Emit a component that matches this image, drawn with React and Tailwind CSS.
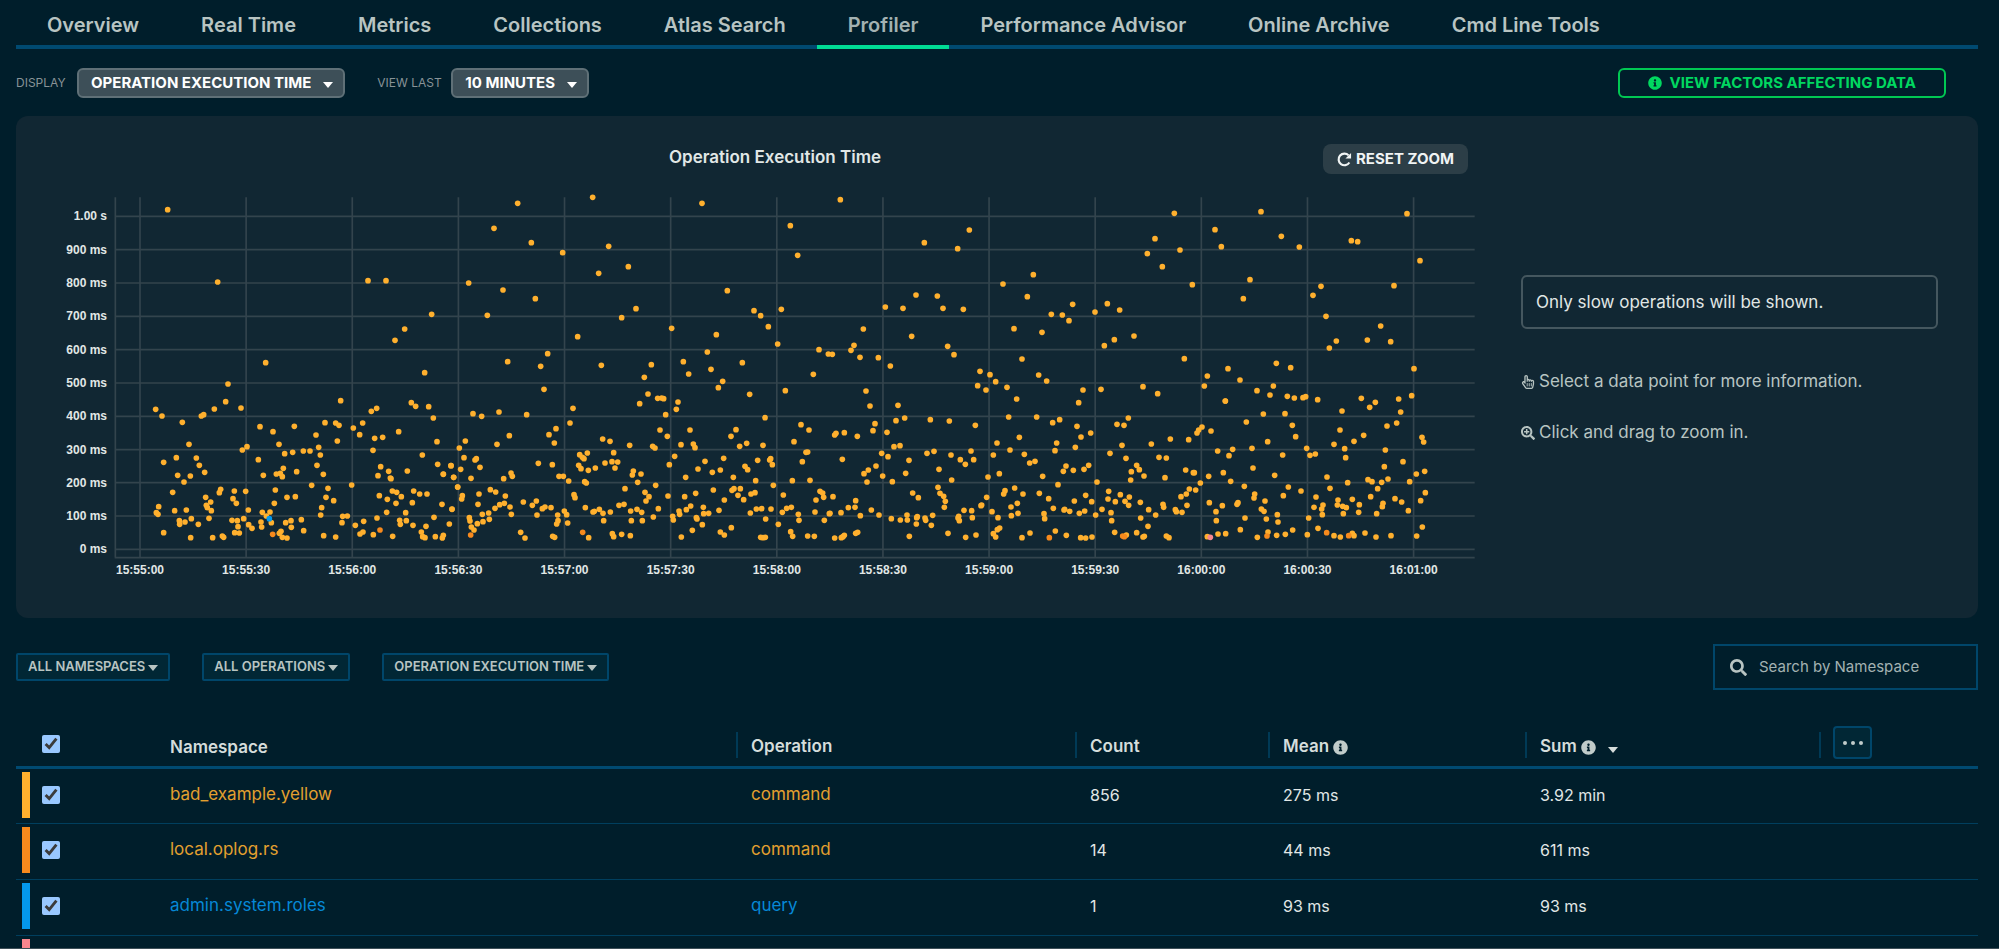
import React from "react";
import {
  FaInfoCircle,
  FaSearch,
  FaSearchPlus,
  FaRegHandPointer,
} from "react-icons/fa";

const tabs = [
  "Overview",
  "Real Time",
  "Metrics",
  "Collections",
  "Atlas Search",
  "Profiler",
  "Performance Advisor",
  "Online Archive",
  "Cmd Line Tools",
];

const yTicks = [
  ["1.00 s", 109],
  ["900 ms", 209],
  ["800 ms", 309],
  ["700 ms", 409],
  ["600 ms", 509],
  ["500 ms", 609],
  ["400 ms", 709],
  ["300 ms", 809],
  ["200 ms", 908],
  ["100 ms", 1008],
  ["0 ms", 1108],
];

const xTicks = [
  "15:55:00",
  "15:55:30",
  "15:56:00",
  "15:56:30",
  "15:57:00",
  "15:57:30",
  "15:58:00",
  "15:58:30",
  "15:59:00",
  "15:59:30",
  "16:00:00",
  "16:00:30",
  "16:01:00",
];

// Samples as "x,y" pairs in chart units, grouped by time window.
const windows = [
  {
    dx: 0,
    dy: 0,
    points:
      "323,89 473,306 504,612 497,665 463,687 543,684 287,688 306,708 367,727 424,708 431,704 387,793 349,833 311,847 409,834 418,856 434,877 353,886 391,888 372,906 338,937 296,980 289,998 294,1003 344,992 379,990 311,1058 358,1022 359,1033 375,1026 394,1016 415,1033 392,1073 437,952 452,966 439,976 442,983 454,992 447,1015 482,928 478,938 458,1073 487,1068 491,1072 523,933 557,934 519,956 529,970 565,990 516,1021 532,1022 551,1016 534,1040 566,1034 576,1045 524,1058 538,1059 547,810 561,800 617,548 600,740 639,755 703,739 657,793 674,821 698,817 595,839 610,886 649,882 661,880 670,865 667,890 710,875 730,813 750,813 768,765 776,802 781,825 795,728 827,729 837,736 842,662 832,783 771,856 790,883 755,916 804,925 875,915 646,930 643,970 681,952 706,950 798,952 821,962 785,983 607,997 630,996 619,1008 603,1026 634,1028 605,1041 677,1028 693,1022 694,1042 724,1019 731,1052 658,1060 663,1054 667,1072 681,1074 782,1005 848,1009 862,1008 846,1028 791,1067 827,1071 886,1036 911,1024 900,1062 909,1056 940,1064 924,302 978,302 1115,403 1034,447 1005,481 1094,578 1054,668 1067,679 1106,680 950,685 934,694 1120,714 908,729 880,744 899,764 944,775 968,772 1016,755 939,811 1131,785 1087,825 962,860 954,887 986,874 991,894 993,896 1042,873 1133,853 1150,883 958,947 982,958 997,933 1010,937 1024,950 1008,970 1061,933 1079,942 1101,942 1057,968 980,997 1037,998 951,1014 1019,1021 1021,1033 1039,1022 1059,1036 1098,1039 1122,1012 998,1069 1084,1056 1088,1070 1095,1073 1126,1070 1173,857 1181,892 1193,921 1176,987 1168,1032 1146,973 1150,1066 1147,1074",
  },
  {
    dx: 1140,
    dy: 0,
    points:
      "10,882 58,804 76,783 53,921 62,868 72,833 93,895 109,836 105,840 120,862 67,947 65,957 117,942 114,973 88,1013 90,1023 94,1041 102,1050 112,1031 127,1003 129,1025 146,999 148,1018 151,929 167,936 196,948 165,985 179,974 193,970 210,981 214,1003 191,896 213,879 217,889 171,793 208,767 177,696 99,701 125,709 142,406 86,309 189,330 162,145 233,70 274,188 286,356 203,545 302,559 323,521 312,628 260,704 327,764 348,746 343,789 295,850 337,854 368,218 250,966 277,976 289,963 307,986 315,981 333,983 291,1005 242,1057 255,1074 338,1069 344,1072 357,889 370,889 386,903 353,1005 354,1022 350,1032 373,993 380,1004 383,1029 402,944 405,953 390,729 399,685 413,470 458,52 506,199 476,280 565,260 588,386 545,413 484,556 488,777 510,784 419,824 442,819 427,832 432,836 416,856 423,866 445,871 466,864 434,905 439,909 495,849 516,845 533,846 521,818 525,864 436,983 459,996 463,994 478,988 489,1000 511,996 491,1022 446,1073 517,1061 521,1070 545,1063 537,976 552,973 555,926 572,993 591,988 605,997 574,1022 607,1022 571,1067 569,796 580,873 577,885 603,882 593,907 613,592 634,554 624,642 599,671 653,655 665,654 671,656 677,704 660,750 682,769 638,799 645,804 647,916 615,937 627,950 618,963 655,986 640,1011 684,948 688,854 695,445 714,666 709,688 704,829 723,794 750,750 760,792 765,803 730,545 746,582 786,70 802,516 829,464 813,568 848,604 835,623 737,892 774,867 795,844 817,877 841,870 851,835 734,950 767,940 752,978 739,989 717,993 719,1003 698,1009 700,1020 790,982 791,1001 806,1000 837,991 769,1013 771,1017 787,1034 757,1051 724,1071 820,930 841,1056 33,857 41,892 36,988",
  },
  {
    dx: 1980,
    dy: 0,
    points:
      "13,1065 13,960 33,769 48,749 59,799 80,790 22,332 102,392 122,407 145,440 67,548 89,643 135,713 129,796 184,388 211,137 233,226 361,59 173,492 196,632 243,734 267,750 222,785 113,841 152,836 149,840 157,854 75,859 83,869 40,892 107,902 36,931 42,926 61,926 54,946 71,959 93,942 105,938 160,916 91,999 109,987 125,986 153,987 137,1017 34,1043 122,1072 129,1073 136,1072 175,1033 212,1055 218,1069 190,945 187,997 200,985 214,982 235,1003 237,1021 217,902 270,901 247,845 258,817 263,816 285,996 288,960 300,934 308,939 311,952 339,950 328,1001 330,1000 363,998 313,1021 263,1068 283,1069 344,1074 364,1073 369,1070 373,1066 407,1060 413,1057 385,983 405,982 407,962 421,1007 367,838 344,765 348,760 373,758 412,769 280,583 297,509 325,522 337,523 393,511 402,496 430,447 420,532 475,533 438,633 450,678 465,731 459,752 485,820 504,830 468,858 445,870 432,881 441,906 488,888 454,990 477,1005 511,558 496,381 549,385 588,345 613,188 575,469 534,676 528,722 554,714 501,757 522,800 540,797 567,841 557,880 517,905 578,939 595,953 514,1016 541,1020 561,1005 562,1020 592,1010 590,1013 589,1032 615,1014 617,1021 634,1036 638,1006 568,1069 621,820 642,814 631,719 688,723 652,348 669,385 730,388 713,206 748,150 683,499 702,524 693,825 721,839 736,853 753,813 761,839 766,736 657,868 695,900 654,922 660,940 671,949 676,964 673,982 732,991 755,992 716,1009 714,1014 718,1022 757,1013 684,1060 737,1072 768,1065 783,977 785,975 800,952 804,891 820,825 780,574 810,584 827,605 773,617 798,630 831,789 816,995 834,1013",
  },
  {
    dx: 2820,
    dy: 0,
    points:
      "9,312 42,446 66,537 21,622 50,657 26,711 58,772 30,810 73,823 -2,881 15,932 11,942 44,924 69,942 52,970 33,981 54,1000 34,1007 -1,1044 -8,1049 -20,1061 -13,1071 66,1073 90,1059 100,284 82,350 154,403 187,405 207,422 218,373 126,457 116,585 140,603 110,711 179,719 158,728 170,789 165,812 105,844 89,849 128,889 174,914 118,940 146,956 160,985 132,1001 134,1016 166,1053 199,1066 194,988 192,990 209,994 223,963 190,874 198,858 220,871 252,868 266,856 226,802 243,771 231,739 272,759 249,630 236,668 285,396 322,371 359,390 343,479 313,497 402,468 303,628 257,946 275,965 238,1000 254,993 242,1073 257,1074 276,1071 287,1005 291,906 306,988 333,998 335,1022 326,934 324,957 346,965 361,944 375,964 388,951 386,976 344,1057 379,1065 410,1058 433,1069 429,1071 330,820 366,796 378,835 351,733 372,736 385,714 410,856 418,869 394,875 432,888 392,900 421,967 446,989 422,1014 444,1039 467,1005 429,620 473,641 454,792 511,777 477,832 499,834 495,893 489,973 491,982 499,1068 507,1073 523,100 465,176 442,221 487,260 540,210 577,314 553,536 566,779 591,759 596,750 606,741 633,753 557,870 580,878 583,878 601,909 587,930 568,927 559,942 543,950 561,976 526,989 529,995 546,997 613,618 622,588 645,149 664,200 676,663 653,813 626,889 628,968 648,995 649,1022 622,1070 654,1062",
  },
  {
    dx: 3480,
    dy: -150,
    points:
      "123,245 184,319 238,351 90,449 70,506 24,716 60,750 16,813 79,876 38,958 27,977 10,1028 32,1054 73,1069 7,1127 54,1118 51,1123 75,1164 61,1199 17,1211 111,782 150,795 160,768 169,700 212,713 202,799 223,804 249,803 257,800 130,852 195,851 217,886 227,920 143,935 96,955 188,975 99,1014 164,1036 205,1071 190,1097 243,1083 104,1092 102,1104 135,1113 124,1137 132,1144 139,1167 172,1154 174,1176 144,1206 112,1222 170,1216 196,1213 218,1200 262,1214 266,1164 260,955 270,976 286,972 293,809 279,496 303,469 318,559 328,654 349,633 394,332 413,335 366,843 360,900 342,943 374,956 377,983 402,934 431,916 424,805 449,832 466,817 442,630 482,588 512,635 522,467 561,251 600,392 582,716 575,797 536,807 542,846 530,879 501,888 606,922 611,936 496,960 549,995 493,1010 614,1024 589,1032 569,1055 616,1088 602,1112 321,1041 330,1075 383,1058 288,1101 282,1132 309,1125 305,1137 307,1154 354,1110 352,1125 368,1129 379,1133 370,1151 397,1108 418,1124 416,1147 444,1049 456,1055 485,1057 504,1047 473,1076 452,1100 525,1106 545,1116 489,1120 487,1130 470,1151 565,1142 607,1191 590,1218 513,1217 468,1221 435,1209 397,1210 402,1217 342,1217 361,1221 294,1195",
  },
];

const oplogPoints = [
  [638, 1063],
  [960, 1050],
  [1232, 1065],
  [1568, 1057],
  [2968, 1073],
  [3188, 1068],
  [3193, 1070],
  [3621, 1068],
  [3800, 1058],
  [3866, 1067],
];

function Caret({ className = "" }) {
  return (
    <svg viewBox="0 0 10 6" className={`pointer-events-none h-[6px] w-[10px] ${className}`} aria-hidden="true">
      <path d="M0 0h10L5 6z" fill="currentColor" />
    </svg>
  );
}

function Chart() {
  return (
    <svg
      viewBox="0 0 4254 1230"
      className="block h-auto w-[1418px]"
      role="img"
      aria-label="Operation Execution Time scatter chart"
    >
      <g stroke="#33444d" strokeWidth="5">
        {yTicks.map(([label, y]) => (
          <line key={label} x1="166" x2="4244" y1={y} y2={y} />
        ))}
        {xTicks.map((label, i) => (
          <line key={label} x1={240 + i * 318.4} x2={240 + i * 318.4} y1="52" y2="1132" />
        ))}
        <line x1="166" x2="166" y1="52" y2="1132" />
        <line x1="164" x2="4244" y1="1133" y2="1133" />
      </g>
      <g fill="#e1e7e6" fontFamily="'Liberation Sans', Arial, sans-serif" fontWeight="700" fontSize="36">
        {yTicks.map(([label, y]) => (
          <text key={label} x="141" y={y + 12} textAnchor="end">
            {label}
          </text>
        ))}
        {xTicks.map((label, i) => (
          <text key={label} x={240 + i * 318.4} y="1183" textAnchor="middle">
            {label}
          </text>
        ))}
      </g>
      {windows.map((w) => (
        <g key={w.dx} fill="#ffb02e" transform={`translate(${w.dx} ${w.dy})`}>
          {w.points.split(" ").map((p, j) => {
            const [x, y] = p.split(",");
            return <circle key={j} cx={x} cy={y} r="8.5" />;
          })}
        </g>
      ))}
      <g fill="#f78a1d">
        {oplogPoints.map(([x, y]) => (
          <circle key={x} cx={x} cy={y} r="8.5" />
        ))}
      </g>
      <circle cx="628" cy="1016" r="8.5" fill="#0498ec" />
      <circle cx="3451" cy="1072" r="8.5" fill="#f9868e" />
    </svg>
  );
}

function FilterSelect({ label, value }) {
  return (
    <div className="grid items-center text-[#b8c4c2]">
      <select
        aria-label={label}
        className="col-start-1 row-start-1 field-sizing-content h-7 appearance-none rounded-xs border-2 border-[#00466a] bg-[#012735] pr-[23px] pl-[10px] text-[13px] font-semibold"
      >
        <option>{value}</option>
      </select>
      <Caret className="col-start-1 row-start-1 mt-px mr-3 justify-self-end" />
    </div>
  );
}

function ToolbarSelect({ id, value }) {
  return (
    <div className="grid items-center text-white">
      <select
        id={id}
        className="col-start-1 row-start-1 field-sizing-content h-[30px] appearance-none rounded-md border-2 border-[#5f7077] bg-[#3d4f58] pr-8 pl-3 text-[15px] font-bold"
      >
        <option>{value}</option>
      </select>
      <Caret className="col-start-1 row-start-1 mt-[3px] mr-3 justify-self-end" />
    </div>
  );
}

function HeadCell({ children }) {
  return (
    <th className="h-[38px] p-0 text-left align-bottom">
      <div className="mb-2 flex h-[26px] items-center gap-1 border-l-2 border-[#003a56] pt-1 pl-[13px] text-[17px] font-semibold text-[#d5dddb]">
        {children}
      </div>
    </th>
  );
}

const rows = [
  { ns: "bad_example.yellow", op: "command", count: "856", mean: "275 ms", sum: "3.92 min", bar: "bg-[#ffb02e]", text: "text-[#e3a02f]" },
  { ns: "local.oplog.rs", op: "command", count: "14", mean: "44 ms", sum: "611 ms", bar: "bg-[#f78a1d]", text: "text-[#e3a02f]" },
  { ns: "admin.system.roles", op: "query", count: "1", mean: "93 ms", sum: "93 ms", bar: "bg-[#0498ec]", text: "text-[#0688d6]" },
  { ns: "", op: "", count: "", mean: "", sum: "", bar: "bg-[#f9868e]", text: "text-[#f9868e]" },
];

export default function App() {
  return (
    <div className="flex h-screen flex-col overflow-hidden border-b border-[#3d4f58] bg-[#001e2b] pr-[21px] pl-4 font-['Inter',sans-serif] text-[#e1e7e6]">
      <nav className="flex h-[49px] shrink-0 border-b-4 border-[#004a71]">
        {tabs.map((tab) => (
          <a
            key={tab}
            href="#"
            aria-current={tab === "Profiler" ? "page" : undefined}
            className={
              tab === "Profiler"
                ? "flex h-[49px] items-center border-b-4 border-[#00dc95] px-[31px] pt-[5px] text-xl font-semibold text-[#a3b2b2]"
                : "flex h-[49px] items-center border-b-4 border-transparent px-[31px] pt-[5px] text-xl font-semibold text-[#b8c4c2]"
            }
          >
            {tab}
          </a>
        ))}
      </nav>

      <div className="mt-[19px] flex h-[30px] shrink-0 items-center pr-8">
        <label htmlFor="display" className="w-[61px] text-xs text-[#889397]">
          DISPLAY
        </label>
        <ToolbarSelect id="display" value="OPERATION EXECUTION TIME" />
        <label htmlFor="last" className="ml-8 w-[74px] text-xs text-[#889397]">
          VIEW LAST
        </label>
        <ToolbarSelect id="last" value="10 MINUTES" />
        <button className="ml-auto flex h-[30px] items-center gap-2 rounded-md border-2 border-[#00c853] px-7 text-[15px] font-bold text-[#00d860]">
          <FaInfoCircle className="size-[14px]" />
          VIEW FACTORS AFFECTING DATA
        </button>
      </div>

      <section className="mt-[18px] flex h-[502px] shrink-0 rounded-xl bg-[#112733] pl-11">
        <div className="w-[1461px] shrink-0">
          <div className="grid h-16 grid-cols-[1fr_auto_1fr] items-center pr-[53px] pl-[22px]">
            <span />
            <h2 className="pt-5 text-[17px] font-semibold">Operation Execution Time</h2>
            <button className="mt-7 flex h-[30px] items-center gap-1 self-start justify-self-end rounded-lg bg-[#2c3e47] px-[14px] text-[15px] font-bold text-[#f0f4f4]">
              <svg viewBox="0 0 16 16" className="size-[15px]" fill="none" stroke="currentColor" strokeWidth="2.3">
                <path d="M13.2 11.2A6.2 6.2 0 1 1 12.4 3.6" />
                <path d="M15 1v6H9z" fill="currentColor" stroke="none" />
              </svg>
              RESET ZOOM
            </button>
          </div>
          <Chart />
        </div>
        <aside className="mr-10 flex-1 pt-[159px] text-[17px] text-[#b8c4c2]">
          <p className="flex h-[54px] items-center rounded-md border-2 border-[#45575f] px-[13px] pt-px text-[#e1e7e6]">
            Only slow operations will be shown.
          </p>
          <p className="mt-[41px] flex h-6 items-center gap-1">
            <FaRegHandPointer className="size-[14px]" />
            Select a data point for more information.
          </p>
          <p className="mt-[27px] flex h-6 items-center gap-1">
            <FaSearchPlus className="size-[14px]" />
            Click and drag to zoom in.
          </p>
        </aside>
      </section>

      <div className="mt-[26px] flex h-[46px] shrink-0 items-center gap-8">
        <FilterSelect label="Namespaces" value="ALL NAMESPACES" />
        <FilterSelect label="Operations" value="ALL OPERATIONS" />
        <FilterSelect label="Metric" value="OPERATION EXECUTION TIME" />
        <label className="ml-auto flex h-[46px] w-[265px] items-center gap-3 border-2 border-[#00466a] px-[15px]">
          <FaSearch className="size-[17px] shrink-0 text-[#b8c4c2]" />
          <input
            type="text"
            aria-label="Search by Namespace"
            placeholder="Search by Namespace"
            className="w-full bg-transparent text-[15px] outline-none placeholder:text-[#a3b2b2]"
          />
        </label>
      </div>

      <table className="mt-9 w-full table-fixed border-collapse">
        <colgroup>
          <col className="w-[154px]" />
          <col className="w-[566px]" />
          <col className="w-[339px]" />
          <col className="w-[193px]" />
          <col className="w-[257px]" />
          <col className="w-[294px]" />
          <col />
        </colgroup>
        <thead>
          <tr className="border-b-3 border-[#004a71]">
            <th className="p-0 pb-[13px] pl-[26px] text-left align-bottom">
              <input type="checkbox" defaultChecked aria-label="Select all" className="block size-[18px] scheme-dark" />
            </th>
            <th className="p-0 pb-[6px] text-left align-bottom text-[17px] font-semibold text-[#d5dddb]">Namespace</th>
            <HeadCell>Operation</HeadCell>
            <HeadCell>Count</HeadCell>
            <HeadCell>
              Mean <FaInfoCircle className="size-[15px] text-[#c1ccca]" />
            </HeadCell>
            <HeadCell>
              Sum <FaInfoCircle className="size-[15px] text-[#c1ccca]" />
              <Caret className="mt-[6px] ml-2" />
            </HeadCell>
            <th className="p-0 align-bottom">
              <div className="flex items-end gap-3">
                <span className="mb-2 h-[26px] border-l-2 border-[#003a56]" />
                <button
                  aria-label="Columns"
                  className="mb-[7px] flex h-[33px] w-[39px] items-center justify-center gap-[4px] rounded-sm border-2 border-[#00466a] bg-[#012735]"
                >
                  <span className="size-[4px] rounded-full bg-[#c1ccca]" />
                  <span className="size-[4px] rounded-full bg-[#c1ccca]" />
                  <span className="size-[4px] rounded-full bg-[#c1ccca]" />
                </button>
              </div>
            </th>
          </tr>
        </thead>
        <tbody>
          {rows.map((r) => (
            <tr key={r.bar} className="h-14 border-b border-[#003f5e] text-base">
              <td className="p-0 pb-[3px] pl-[6px]">
                <div className="flex items-center gap-3">
                  <span className={`h-[46px] w-2 ${r.bar}`} />
                  <input type="checkbox" defaultChecked aria-label={`Select ${r.ns}`} className="size-[18px] scheme-dark" />
                </div>
              </td>
              <td className="p-0 pb-[3px] text-[17px]">
                <a href="#" className={r.text}>{r.ns}</a>
              </td>
              <td className="p-0 pb-[3px] pl-[15px] text-[17px]">
                <a href="#" className={r.text}>{r.op}</a>
              </td>
              <td className="p-0 pb-[3px] pl-[15px]">{r.count}</td>
              <td className="p-0 pb-[3px] pl-[15px]">{r.mean}</td>
              <td className="p-0 pb-[3px] pl-[15px]">{r.sum}</td>
              <td className="p-0" />
            </tr>
          ))}
        </tbody>
      </table>
    </div>
  );
}
